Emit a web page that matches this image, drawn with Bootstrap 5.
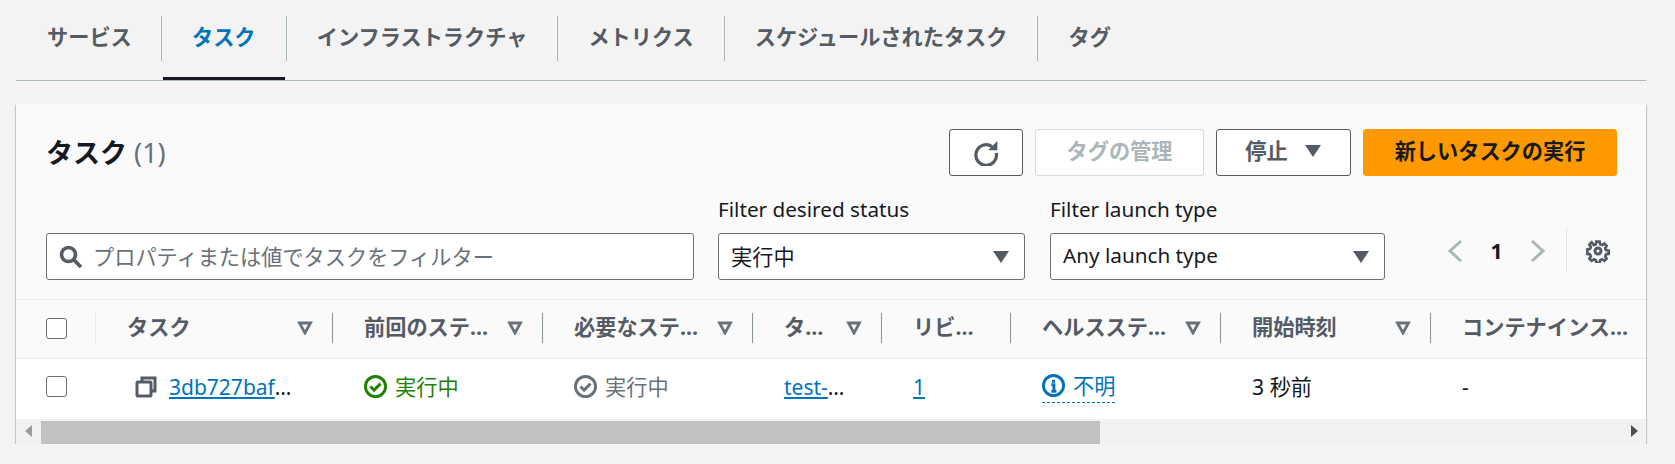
<!DOCTYPE html>
<html lang="ja">
<head>
  <meta charset="UTF-8">
  <title>タスク</title>
  <link href="https://cdn.jsdelivr.net/npm/bootstrap@5.3.0/dist/css/bootstrap.min.css" rel="stylesheet">
  <style>
    body { background: #f3f3f3; color: #16191f; font-family: "Noto Sans", "Noto Sans CJK JP", sans-serif; font-size: 21.2px; line-height: 30px; overflow: hidden; }
    .page { padding: 0 29px 0 16px; }
    svg { flex: none; display: block; }
    .latin { font-size: 20.7px; }
    .tabs { height: 81px; border-bottom: 1px solid #aab7b8; flex-wrap: nowrap; }
    .tabs .tab-item { height: 80px; padding-top: 16px; }
    .tabs .nav-link { height: 45px; padding: 6px 30px 0; color: #545b64; font-weight: 700; line-height: 30px; border-left: 1px solid #aab7b8; }
    .tabs .tab-item:first-child .nav-link { border-left: 0; padding: 6px 29px 0 31px; }
    .tabs .tab-sep { width: 1px; height: 45px; margin: 16px 1px 0 0; background: #aab7b8; }
    .tabs .active-tab { border-bottom: 3px solid #16191f; margin-right: 1px; }
    .tabs .active-tab .nav-link { color: #0073bb; border-left: 0; padding: 6px 0 0; width: 122px; text-align: center; }
    .panel { margin-top: 23px; background: #fafafa; border: 0; border-radius: 0; box-shadow: 0 1px 1px 0 rgba(0,28,36,.3), 1px 1px 1px 0 rgba(0,28,36,.15), -1px 1px 1px 0 rgba(0,28,36,.15); }
    .panel-head { padding: 25px 29px 19px 30px; }
    .panel-title { font-size: 27px; line-height: 47px; font-weight: 700; margin: 0; }
    .panel-title span { color: #687078; font-weight: 400; }
    .btn-row { gap: 12px; }
    .aws-btn { height: 47px; border: 1.5px solid #545b64; border-radius: 3px; background: #fff; color: #545b64; font-size: 21.2px; font-weight: 700; line-height: 30px; padding: 0 0 3px; }
    .aws-btn:disabled { border-color: #d5dbdb; background: #fff; color: #aab7b8; opacity: 1; }
    .btn-refresh { width: 74px; padding: 0; }
    .btn-tags { width: 169px; }
    .btn-stop { width: 135px; }
    .btn-run { width: 254px; background: #f90; border-color: #f90; color: #16191f; }
    .filters { margin-top: 18px; }
    .filter-label { line-height: 30px; margin-bottom: 9px; }
    .fake-input { height: 47px; border: 1.5px solid #687078; border-radius: 3px; background: #fff; line-height: 30px; padding: 0 14px 0 12px; }
    .launch-box.latin { padding: 0 14px 3px 12px; }
    .launch-box.latin svg { margin-top: 3px; }
    .search-box { width: 648px; color: #687078; gap: 11px; }
    .status-box { width: 307px; }
    .launch-wrap { margin-left: 25px; }
    .launch-box { width: 335px; }
    .pager { height: 47px; margin-bottom: 6px; padding-left: 59px; font-weight: 700; }
    .pager .page-no { width: 61px; text-align: center; }
    .pager .divider { width: 1px; height: 45px; background: #e3e6e6; margin: 0 19px 0 17px; }
    .table-wrap { overflow: hidden; }
    .task-table { table-layout: fixed; width: 1631px; margin: 0; --bs-table-bg: transparent; }
    .task-table th { height: 59px; padding: 0 0 2px; vertical-align: middle; background: #fafafa; border-top: 1px solid #eaeded; border-bottom: 1px solid #eaeded; color: #545b64; font-weight: 700; }
    .task-table td { height: 60px; padding: 0 30px 4px 31px; vertical-align: middle; background: #fff; border: 0; color: #16191f; }
    .task-table td.check-cell { padding-left: 30px; }
    .task-table td.task-cell { padding-right: 38px; padding-left: 39px; }
    .th-inner { height: 30px; padding: 0 19px 0 31px; border-right: 1px solid #879596; gap: 6px; }
    .th-inner span { padding-bottom: 2px; }
    th:last-child .th-inner { border-right: 0; padding-right: 18px; }
    th:first-child .th-inner { border-right-color: #eaeded; padding: 0 0 0 30px; }
    .cell-flex { gap: 8px; }
    .task-cell .cell-flex { gap: 12px; }
    .link-cell { font-size: 21px; }
    a { color: #0073bb; }
    .form-check-input.box { display: block; width: 21px; height: 21px; margin: 0; border: 1.5px solid #687078; border-radius: 3px; }
    .state-ok { color: #1d8102; }
    .state-idle { color: #687078; }
    .state-info { color: #0073bb; border-bottom: 1.5px dashed #0073bb; line-height: 32px; }
    .fake-scroll { height: 25px; background: #f1f1f1; }
    .fake-scroll .end { width: 25px; height: 25px; }
    .fake-scroll .thumb { width: 1059px; height: 23px; margin-top: 2px; background: #c1c1c1; }
  </style>
</head>
<body>
<div class="page">
  <ul class="nav tabs">
    <li class="nav-item tab-item"><a class="nav-link" href="#">サービス</a></li>
    <li class="tab-sep"></li>
    <li class="nav-item tab-item active-tab"><a class="nav-link" href="#">タスク</a></li>
    <li class="nav-item tab-item"><a class="nav-link" href="#">インフラストラクチャ</a></li>
    <li class="nav-item tab-item"><a class="nav-link" href="#">メトリクス</a></li>
    <li class="nav-item tab-item"><a class="nav-link" href="#">スケジュールされたタスク</a></li>
    <li class="nav-item tab-item"><a class="nav-link" href="#">タグ</a></li>
  </ul>

  <div class="card panel">
    <div class="panel-head">
      <div class="d-flex justify-content-between">
        <h2 class="panel-title">タスク <span>(1)</span></h2>
        <div class="d-flex btn-row">
          <button class="btn aws-btn btn-refresh d-flex align-items-center justify-content-center" type="button">
            <svg width="26" height="26" viewBox="0 0 24 24" fill="none"><path d="M17.500 6A9.500 9.500 0 1 0 21.500 12" stroke="#545b64" stroke-width="3"/><path d="M14 9.500H22.500V1z" fill="#545b64"/></svg>
          </button>
          <button class="btn aws-btn btn-tags" type="button" disabled>タグの管理</button>
          <button class="btn aws-btn btn-stop d-flex align-items-center justify-content-center gap-3" type="button">停止
            <svg width="18" height="14" viewBox="0 0 18 14" fill="#545b64"><path d="M1 1h16L9 13z"/></svg>
          </button>
          <button class="btn aws-btn btn-run" type="button">新しいタスクの実行</button>
        </div>
      </div>
      <div class="d-flex align-items-end filters">
        <div class="fake-input search-box d-flex align-items-center">
          <svg width="23" height="23" viewBox="0 0 23 23" fill="none" stroke="#545b64" stroke-width="3.600"><circle cx="9.500" cy="9.500" r="7"/><path d="M14.500 14.500L22 22"/></svg>
          プロパティまたは値でタスクをフィルター
        </div>
        <div class="ms-4">
          <div class="filter-label latin">Filter desired status</div>
          <div class="fake-input status-box d-flex align-items-center justify-content-between">実行中
            <svg width="18" height="14" viewBox="0 0 18 14" fill="#545b64"><path d="M1 1h16L9 13z"/></svg>
          </div>
        </div>
        <div class="launch-wrap">
          <div class="filter-label latin">Filter launch type</div>
          <div class="fake-input launch-box latin d-flex align-items-center justify-content-between">Any launch type
            <svg width="18" height="14" viewBox="0 0 18 14" fill="#545b64"><path d="M1 1h16L9 13z"/></svg>
          </div>
        </div>
        <div class="pager d-flex align-items-center">
          <svg width="22" height="24" viewBox="0 0 22 24" fill="none" stroke="#aab7b8" stroke-width="3"><path d="M17 2L6 12l11 10"/></svg>
          <span class="page-no">1</span>
          <svg width="22" height="24" viewBox="0 0 22 24" fill="none" stroke="#aab7b8" stroke-width="3"><path d="M5 2l11 10L5 22"/></svg>
          <span class="divider"></span>
          <svg width="24" height="24" viewBox="0 0 16 16" fill="none" stroke="#545b64" stroke-width="2"><path d="M6.800 1h2.400l.4 2 1.400.6 1.700-1.100 1.700 1.700-1.100 1.700.6 1.400 2 .4v2.400l-2 .4-.6 1.400 1.100 1.700-1.700 1.700-1.700-1.100-1.400.6-.4 2H6.800l-.4-2-1.400-.6-1.700 1.100-1.700-1.700 1.100-1.700-.6-1.400-2-.4V6.800l2-.4.6-1.400-1.100-1.700 1.700-1.700L5 3.600l1.400-.6z" transform="translate(.8 .8) scale(.9)"/><circle cx="8" cy="8" r="2"/></svg>
        </div>
      </div>
    </div>

    <div class="table-wrap">
      <table class="table task-table">
        <colgroup>
          <col style="width:80px"><col style="width:237px"><col style="width:210px"><col style="width:210px"><col style="width:129px"><col style="width:129px"><col style="width:210px"><col style="width:210px"><col style="width:216px">
        </colgroup>
        <thead>
          <tr id="head-row"></tr>
        </thead>
        <tbody>
          <tr>
            <td class="check-cell"><input class="form-check-input box" type="checkbox"></td>
            <td class="task-cell"><div class="d-flex align-items-center cell-flex">
              <svg width="22" height="22" viewBox="0 0 22 22" fill="none" stroke="#545b64" stroke-width="3"><path d="M7 5V2h13v13h-3"/><rect x="2" y="6" width="14" height="14" rx="1"/></svg>
              <div class="text-truncate link-cell"><a href="#">3db727baf1234567</a></div>
            </div></td>
            <td><div class="d-flex align-items-center cell-flex state-ok">
              <svg width="23" height="23" viewBox="0 0 16 16" fill="none" stroke="#1d8102" stroke-width="2"><circle cx="8" cy="8" r="7"/><path d="M4.500 8l2.500 2.500 4.500-4.500"/></svg>実行中</div></td>
            <td><div class="d-flex align-items-center cell-flex state-idle">
              <svg width="23" height="23" viewBox="0 0 16 16" fill="none" stroke="#687078" stroke-width="2"><circle cx="8" cy="8" r="7"/><path d="M4.500 8l2.500 2.500 4.500-4.500"/></svg>実行中</div></td>
            <td><div class="text-truncate link-cell"><a href="#">test-service</a></div></td>
            <td class="link-cell"><a href="#">1</a></td>
            <td><div class="d-inline-flex align-items-center cell-flex state-info">
              <svg width="23" height="23" viewBox="0 0 16 16" fill="none" stroke="#0073bb" stroke-width="2"><circle cx="8" cy="8" r="7"/><path d="M6.500 7.500H8.300V12M6.500 12h3.500M8 4v2"/></svg>不明</div></td>
            <td>3 秒前</td>
            <td>-</td>
          </tr>
        </tbody>
      </table>
    </div>

    <div class="fake-scroll d-flex justify-content-between">
      <div class="d-flex">
        <div class="end d-flex align-items-center justify-content-center"><svg width="8" height="12" viewBox="0 0 8 12" fill="#9c9c9c"><path d="M7 0v12L0 6z"/></svg></div>
        <div class="thumb"></div>
      </div>
      <div class="end d-flex align-items-center justify-content-center"><svg width="8" height="12" viewBox="0 0 8 12" fill="#505050"><path d="M1 0v12l7-6z"/></svg></div>
    </div>
  </div>
</div>

<script src="https://cdn.jsdelivr.net/npm/bootstrap@5.3.0/dist/js/bootstrap.bundle.min.js"></script>
<script>
  // table header cells
  const columns = [
    { label: "タスク", sort: true },
    { label: "前回のステータス", sort: true },
    { label: "必要なステータス", sort: true },
    { label: "タスク定義", sort: true },
    { label: "リビジョン", sort: false },
    { label: "ヘルスステータス", sort: true },
    { label: "開始時刻", sort: true },
    { label: "コンテナインスタンス", sort: false }
  ];
  const caret = `<svg width="16" height="14" viewBox="0 0 16 14" fill="none" stroke="#687078" stroke-width="2.800"><path d="M2.500 2h11L8 12z"/></svg>`;
  const row = document.getElementById("head-row");
  row.innerHTML = `<th><div class="th-inner d-flex align-items-center"><input class="form-check-input box" type="checkbox"></div></th>` +
    columns.map(c => `<th><div class="th-inner d-flex align-items-center justify-content-between">
      <span class="text-truncate">${c.label}</span>${c.sort ? caret : ""}</div></th>`).join("");
</script>
</body>
</html>
